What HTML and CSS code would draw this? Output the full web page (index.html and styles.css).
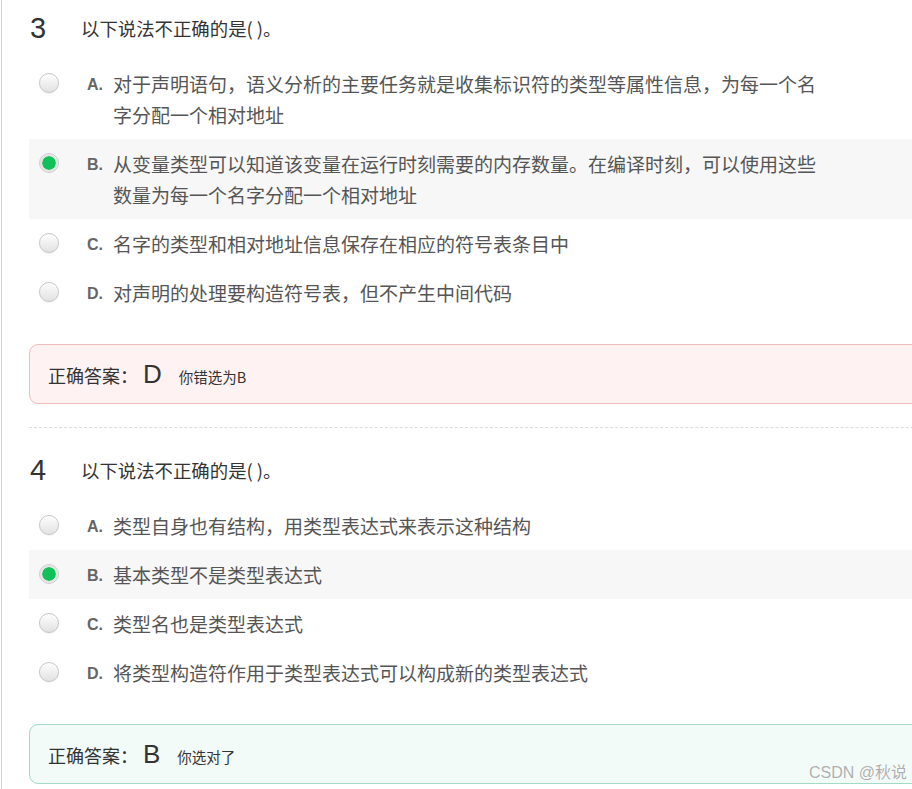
FILE: index.html
```html
<!DOCTYPE html>
<html lang="zh-CN">
<head>
<meta charset="utf-8">
<title>测验</title>
<link rel="stylesheet" href="styles.css">
</head>
<body>
<div class="page">
  <section class="question">
    <div class="q-head">
      <span class="q-num">3</span>
      <span class="q-title">以下说法不正确的是( )。</span>
    </div>
    <ul class="options">
      <li class="option">
        <span class="radio"></span>
        <span class="letter">A.</span>
        <span class="opt-text">对于声明语句，语义分析的主要任务就是收集标识符的类型等属性信息，为每一个名字分配一个相对地址</span>
      </li>
      <li class="option selected">
        <span class="radio checked"></span>
        <span class="letter">B.</span>
        <span class="opt-text">从变量类型可以知道该变量在运行时刻需要的内存数量。在编译时刻，可以使用这些数量为每一个名字分配一个相对地址</span>
      </li>
      <li class="option">
        <span class="radio"></span>
        <span class="letter">C.</span>
        <span class="opt-text">名字的类型和相对地址信息保存在相应的符号表条目中</span>
      </li>
      <li class="option">
        <span class="radio"></span>
        <span class="letter">D.</span>
        <span class="opt-text">对声明的处理要构造符号表，但不产生中间代码</span>
      </li>
    </ul>
    <div class="answer wrong">
      <span class="ans-label">正确答案：</span><span class="ans-key">D</span><span class="ans-note">你错选为B</span>
    </div>
  </section>
  <hr class="sep">
  <section class="question q-second">
    <div class="q-head">
      <span class="q-num">4</span>
      <span class="q-title">以下说法不正确的是( )。</span>
    </div>
    <ul class="options">
      <li class="option">
        <span class="radio"></span>
        <span class="letter">A.</span>
        <span class="opt-text">类型自身也有结构，用类型表达式来表示这种结构</span>
      </li>
      <li class="option selected">
        <span class="radio checked"></span>
        <span class="letter">B.</span>
        <span class="opt-text">基本类型不是类型表达式</span>
      </li>
      <li class="option">
        <span class="radio"></span>
        <span class="letter">C.</span>
        <span class="opt-text">类型名也是类型表达式</span>
      </li>
      <li class="option">
        <span class="radio"></span>
        <span class="letter">D.</span>
        <span class="opt-text">将类型构造符作用于类型表达式可以构成新的类型表达式</span>
      </li>
    </ul>
    <div class="answer right">
      <span class="ans-label">正确答案：</span><span class="ans-key">B</span><span class="ans-note">你选对了</span>
    </div>
  </section>
</div>
<div class="watermark">CSDN @秋说</div>
</body>
</html>
```
FILE: styles.css
```css
html, body {
  margin: 0;
  padding: 0;
  background: #fff;
  overflow: hidden;
}
body {
  width: 912px;
  height: 789px;
  position: relative;
  font-family: "Liberation Sans", "Noto Sans CJK SC", sans-serif;
  color: #333;
}
.page {
  margin-left: 1px;
  border-left: 1px solid #cfcfcf;
  padding-left: 27px;
  width: 1000px;
  height: 789px;
}
.question {
  padding-top: 13px;
}
.q-second {
  padding-top: 27px;
}
.q-head {
  display: flex;
  align-items: center;
  height: 31px;
  padding-left: 1px;
}
.q-num {
  width: 51px;
  font-family: "Liberation Sans", sans-serif;
  font-size: 29px;
  line-height: 31px;
  color: #333;
}
.q-title {
  font-family: "Noto Sans CJK SC", sans-serif;
  font-size: 18.4px;
  line-height: 31px;
  color: #333;
}
.options {
  list-style: none;
  margin: 15px 0 0 0;
  padding: 0;
}
.option {
  display: flex;
  align-items: flex-start;
  padding: 9px 0 9px 10px;
}
.option.selected {
  background: #f7f7f7;
}
.radio {
  flex: none;
  box-sizing: border-box;
  width: 20px;
  height: 20px;
  margin-top: 5px;
  border-radius: 50%;
  border: 1px solid #c6c6c6;
  background: linear-gradient(#fdfdfd, #e2e2e2);
  box-shadow: inset 0 1px 1px #fff, 0 1px 1px rgba(0,0,0,0.06);
}
.radio.checked {
  padding: 2px;
  border-color: #cdcdcd;
  background: #10c15a content-box;
  box-shadow: inset 0 0 0 2px #e4e4e4;
}
.letter {
  flex: none;
  width: 26px;
  margin-left: 28px;
  padding-top: 3px;
  font-family: "Liberation Sans", sans-serif;
  font-weight: bold;
  font-size: 16px;
  line-height: 28px;
  color: #666;
}
.opt-text {
  width: 706px;
  font-family: "Noto Sans CJK SC", sans-serif;
  font-size: 19px;
  line-height: 31px;
  color: #555;
}
.answer {
  margin-top: 27px;
  height: 58px;
  line-height: 58px;
  border-radius: 9px;
  padding-left: 18px;
  white-space: nowrap;
}
.answer.wrong {
  background: #fff2f2;
  border: 1px solid #f1bcbc;
}
.answer.right {
  background: #f2fbf8;
  border: 1px solid #a3dcc6;
}
.ans-label {
  font-family: "Noto Sans CJK SC", sans-serif;
  font-size: 18px;
  color: #333;
}
.ans-key {
  margin-left: 5px;
  font-family: "Liberation Sans", sans-serif;
  font-size: 26px;
  color: #333;
}
.ans-note {
  margin-left: 17px;
  font-family: "Noto Sans CJK SC", sans-serif;
  font-size: 14.5px;
  color: #333;
}
.sep {
  margin: 23px 0 0 0;
  border: 0;
  border-top: 1px dashed #dcdcdc;
  height: 0;
}
.watermark {
  position: absolute;
  right: 5px;
  bottom: 6px;
  font-family: "Liberation Sans", "Noto Sans CJK SC", sans-serif;
  font-size: 16px;
  color: rgba(160,160,160,0.85);
  text-shadow: 0 0 1px rgba(255,255,255,0.9);
}
```
